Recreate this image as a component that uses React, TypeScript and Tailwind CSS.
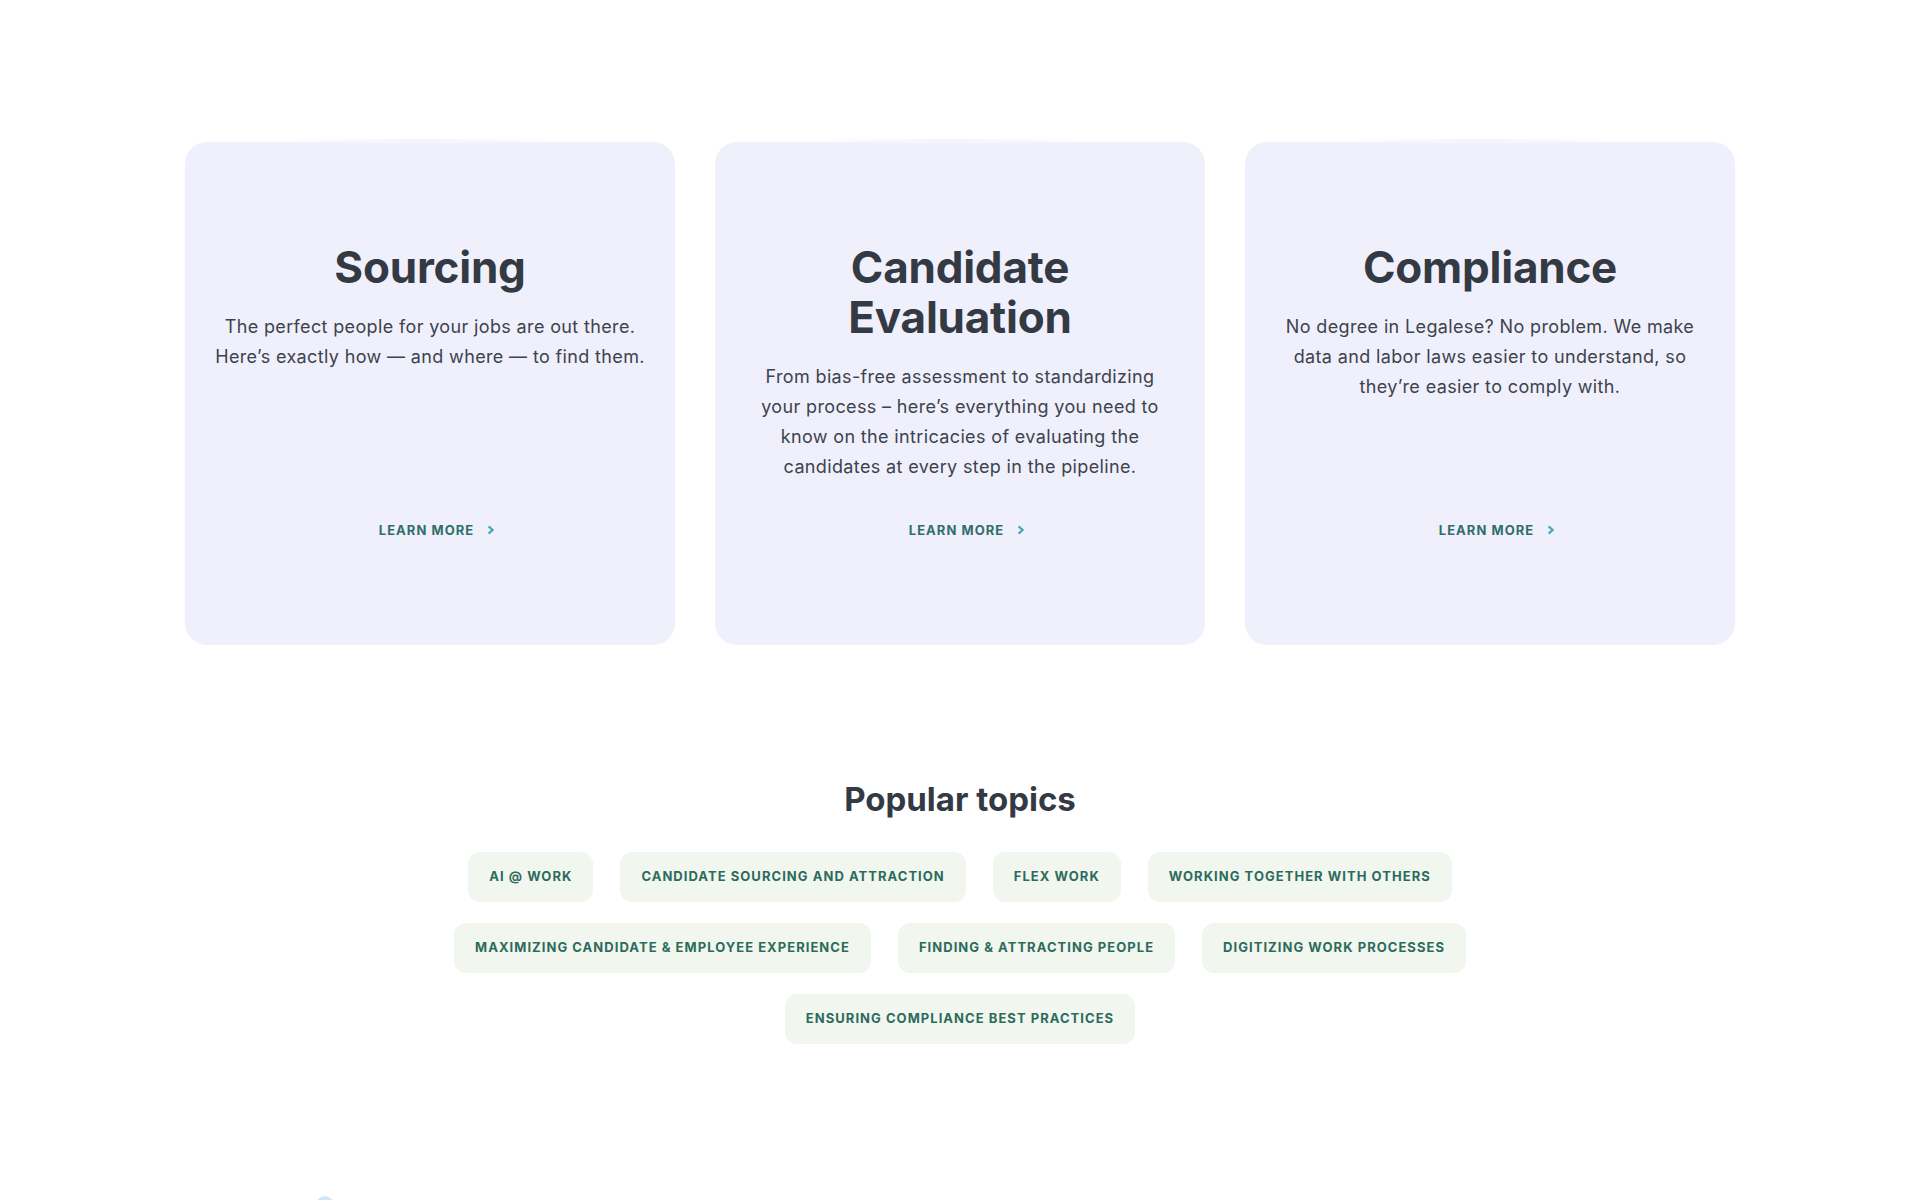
import React from 'react';

type Card = {
  title: string[];
  body: string[];
};

const cards: Card[] = [
  {
    title: ['Sourcing'],
    body: [
      'The perfect people for your jobs are out there.',
      'Here\u2019s exactly how \u2014 and where \u2014 to find them.',
    ],
  },
  {
    title: ['Candidate', 'Evaluation'],
    body: [
      'From bias-free assessment to standardizing',
      'your process \u2013 here\u2019s everything you need to',
      'know on the intricacies of evaluating the',
      'candidates at every step in the pipeline.',
    ],
  },
  {
    title: ['Compliance'],
    body: [
      'No degree in Legalese? No problem. We make',
      'data and labor laws easier to understand, so',
      'they\u2019re easier to comply with.',
    ],
  },
];

const topics = [
  'AI @ Work',
  'Candidate sourcing and attraction',
  'Flex work',
  'Working together with others',
  'Maximizing candidate & employee experience',
  'Finding & attracting people',
  'Digitizing work processes',
  'Ensuring compliance best practices',
];

function Chevron() {
  return (
    <svg className="h-[10px] w-[8px]" viewBox="0 0 8 10" fill="none" aria-hidden="true">
      <path d="M1.6 1.4 5.6 5 1.6 8.6" stroke="#4aa6b6" strokeWidth="2.2" strokeLinejoin="miter" />
    </svg>
  );
}

function TopicCard({ card }: { card: Card }) {
  return (
    <div className="relative flex h-[503px] flex-col items-center rounded-[22px] bg-[#eff0fb] pt-[100px] text-center">
      {/* brush edge on top */}
      <div
        aria-hidden="true"
        className="absolute -top-[3px] left-[80px] right-[100px] h-[5px] rounded-full bg-gradient-to-r from-transparent via-[#f3f4fc] to-transparent"
      />
      <h3 className="text-[44px] font-bold leading-[50px] tracking-[-0.005em] text-[#333a44]">
        {card.title.map((line, i) => (
          <React.Fragment key={i}>
            {i > 0 && <br />}
            {line}
          </React.Fragment>
        ))}
      </h3>
      <p className="mt-5 text-[18px] leading-[30px] tracking-[0.02em] text-[#3d434d]">
        {card.body.map((line, i) => (
          <React.Fragment key={i}>
            {i > 0 && <br />}
            {line}
          </React.Fragment>
        ))}
      </p>
      <a
        href="#"
        className="mt-auto mb-[105px] ml-[14px] flex items-center gap-[13px] text-[13px] font-bold uppercase leading-[20px] tracking-[0.08em] text-[#2f6d6b]"
      >
        Learn more
        <Chevron />
      </a>
    </div>
  );
}

export default function App() {
  return (
    <div className="h-[1200px] overflow-hidden bg-white font-['Inter','Noto_Sans',sans-serif]">
      <section className="pt-[142px]">
        <div className="mx-auto grid w-[1550px] grid-cols-3 gap-[40px]">
          {cards.map((card) => (
            <TopicCard key={card.title.join(' ')} card={card} />
          ))}
        </div>
      </section>

      <section className="mt-[134px] text-center">
        <h2 className="text-[33px] font-bold leading-[40px] text-[#333a44]">Popular topics</h2>
        <div className="mx-auto mt-[33px] flex max-w-[1200px] flex-wrap justify-center gap-x-[27px] gap-y-[21px]">
          {topics.map((t) => (
            <a
              key={t}
              href="#"
              className="flex h-[50px] items-center rounded-[12px] bg-[#f1f6ef] px-[21px] text-[13px] font-bold uppercase tracking-[0.08em] text-[#2c6b5c]"
            >
              {t}
            </a>
          ))}
        </div>
      </section>

      <div className="mt-[152px] pl-[316px]">
        <div className="h-[18px] w-[18px] rounded-full bg-[#cfe7f6]" />
      </div>
    </div>
  );
}
